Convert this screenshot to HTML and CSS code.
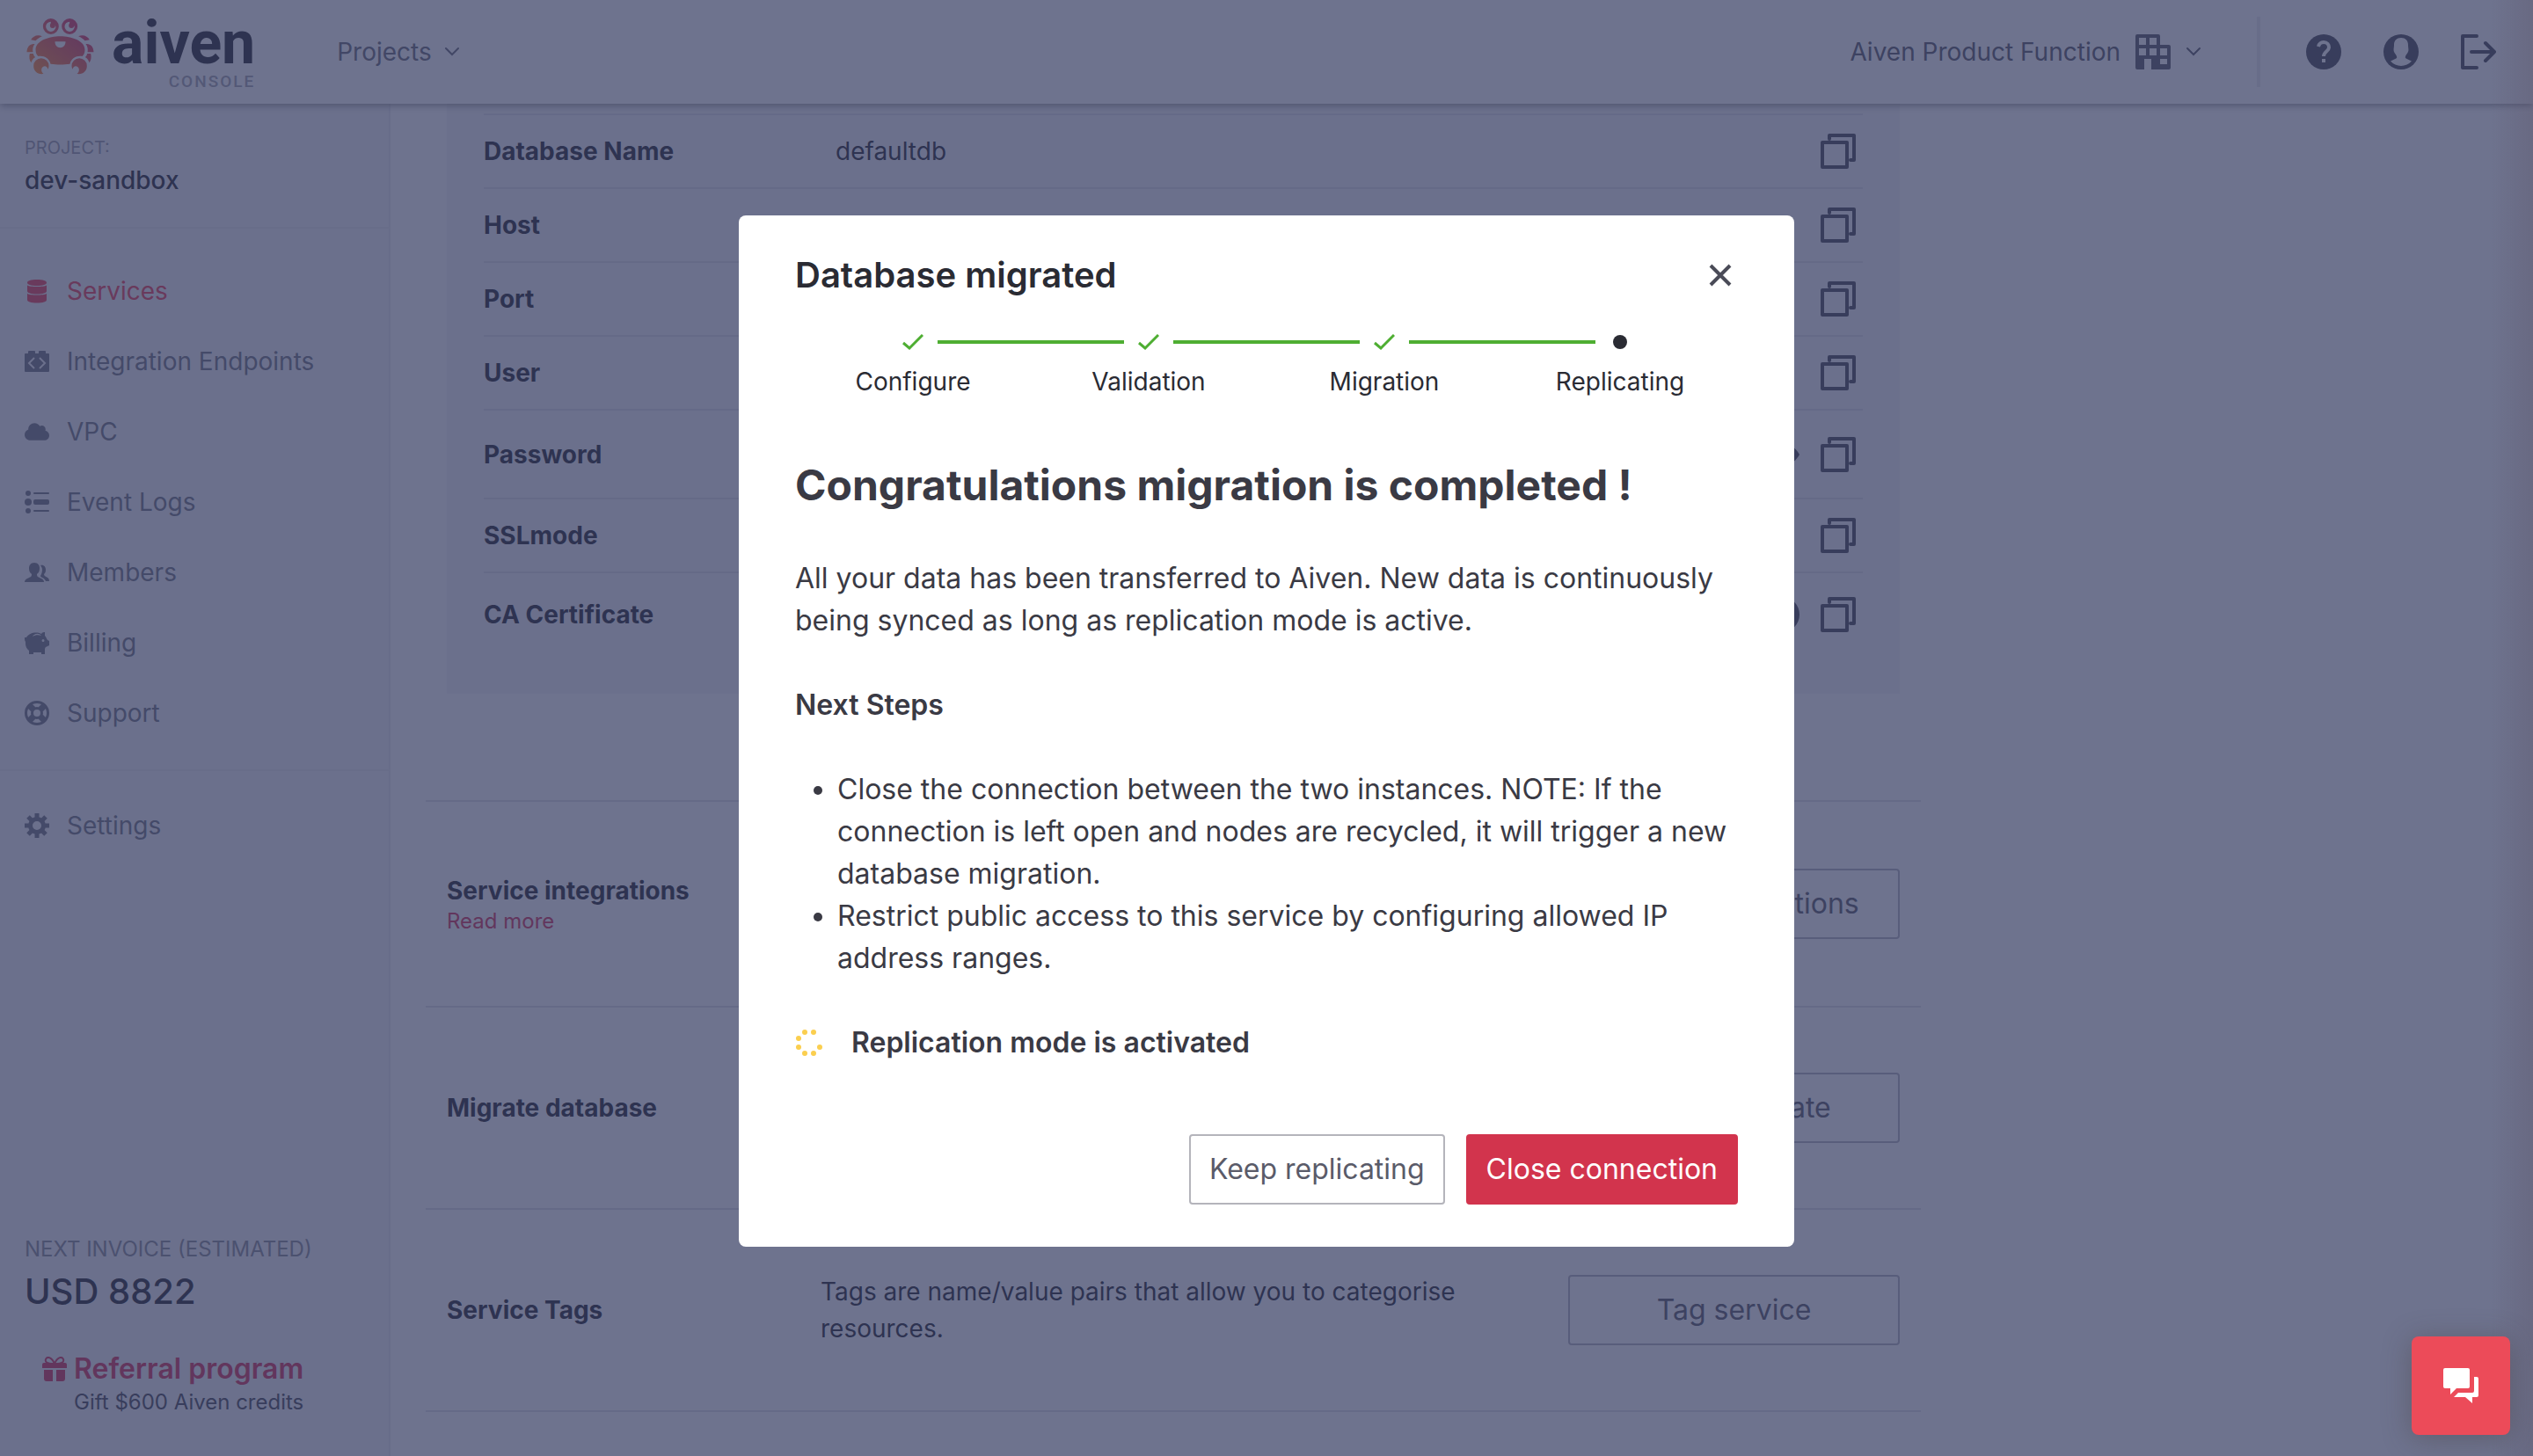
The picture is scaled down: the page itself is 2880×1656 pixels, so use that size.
FILE: index.html
```html
<!DOCTYPE html>
<html lang="en">
<head>
<meta charset="utf-8">
<title>Aiven Console</title>
<meta name="viewport" content="width=device-width, initial-scale=1">
<link rel="stylesheet" href="styles.css">
</head>
<body>
<svg class="sprite" aria-hidden="true">
  <symbol id="copy" viewBox="0 0 40 40"><path d="M10 6V2h28v28h-4M2 10h28v28H2z" fill="none" stroke="currentColor" stroke-width="4" stroke-linejoin="round" stroke-linecap="round"/></symbol>
  <symbol id="chevron" viewBox="0 0 18 12"><path d="M2 2l7 7 7-7" fill="none" stroke="currentColor" stroke-width="2" stroke-linecap="round"/></symbol>
  <symbol id="check" viewBox="0 0 24 18"><path d="M1 10l7 6L23 1" fill="none" stroke="currentColor" stroke-width="3"/></symbol>
</svg>

<div class="app">
  <header class="topbar">
    <a class="logo" href="#">
      <svg class="crab" viewBox="32 32 230 192" aria-hidden="true">
        <defs><linearGradient id="shell" gradientUnits="userSpaceOnUse" x1="200" y1="70" x2="80" y2="220"><stop offset="0" stop-color="#dc3f64"/><stop offset="1" stop-color="#ff8a3a"/></linearGradient></defs>
        <g fill="url(#shell)">
          <path fill-rule="evenodd" d="M115 32a27 27 0 1 1 0 54a27 27 0 1 1 0-54zM115 43a17 17 0 1 0 17 17c-2-2-3-4-3-7a9 9 0 0 1-14-10z"/>
          <path fill-rule="evenodd" d="M179 32a27 27 0 1 1 0 54a27 27 0 1 1 0-54zM179 43a17 17 0 1 0 17 17c-2-2-3-4-3-7a9 9 0 0 1-14-10z"/>
          <circle cx="121" cy="56" r="9"/><circle cx="185" cy="56" r="9"/>
          <path fill-rule="evenodd" d="M147 93c38 0 84 15 84 46c0 10-4 18-9 22c-19-3-37 6-42 26c-20 3-46 3-66 0c-5-20-23-29-42-26c-5-4-9-12-9-22c0-31 46-46 84-46zM129 111c0 12 7 21 18 21s18-9 18-21z"/>
          <path d="M47 105C53 91 72 85 85 93C76 97 69 102 63 108zM33 147C33 129 44 117 60 119C53 128 52 139 54 147zM43 152h12c1 5 3 9 7 12c-8 5-12 11-14 19c-6-7-8-20-5-31z"/>
          <path d="M247 105C241 91 222 85 209 93C218 97 225 102 231 108zM261 147C261 129 250 117 234 119C241 128 242 139 240 147zM251 152h-12c-1 5-3 9-7 12c8 5 12 11 14 19c6-7 8-20 5-31z"/>
          <path d="M56 194a26 26 0 0 1 52 0c0 4-1 8-3 11c-2-10-11-13-17-8c-8 6-6 18 2 24c-20 3-34-9-34-27z"/>
          <path d="M238 194a26 26 0 0 0-52 0c0 4 1 8 3 11c2-10 11-13 17-8c8 6 6 18-2 24c20 3 34-9 34-27z"/>
        </g>
      </svg>
      <span class="wordmark"><span class="word">aiven</span><span class="sub">CONSOLE</span></span>
    </a>
    <button class="menu projects">Projects <svg class="chev" aria-hidden="true"><use href="#chevron"/></svg></button>
    <div class="account">
      <button class="menu org">Aiven Product Function
        <svg class="ico40" viewBox="0 0 40 40" aria-hidden="true"><path fill="currentColor" fill-rule="evenodd" d="M2 0h24a2 2 0 0 1 2 2v10h10a2 2 0 0 1 2 2v24a2 2 0 0 1-2 2H18V28h-8v12H2a2 2 0 0 1-2-2V2a2 2 0 0 1 2-2zM4 4v8h8V4zM16 4v8h8V4zM4 16v8h8v-8zM16 16v8h8v-8zM28 16v8h8v-8zM28 28v6h8v-6z"/></svg>
        <svg class="chev" aria-hidden="true"><use href="#chevron"/></svg></button>
      <span class="divider"></span>
      <button class="iconbtn" aria-label="Help"><svg class="ico40" viewBox="0 0 40 40" aria-hidden="true"><circle cx="20" cy="20" r="20" fill="currentColor"/><path d="M14 14c1-4 4-5 6-5c4 0 6 3 6 6c0 4-6 5-6 10" fill="none" stroke="#fff" stroke-width="4"/><path d="M18 28h4v4h-4z" fill="#fff"/></svg></button>
      <button class="iconbtn" aria-label="Profile"><svg class="ico40" viewBox="0 0 40 40" aria-hidden="true"><circle cx="20" cy="20" r="20" fill="currentColor"/><path fill="#fff" d="M20 4c5 0 8 3 8 8c0 4 1 5 0 8c-1 2-4 5-3 7c1 1 4 2 7 3.500a16 16 0 0 1-24 0c3-1.500 6-2.500 7-3.500c1-2-2-5-3-7c-1-3 0-4 0-8c0-5 3-8 8-8z"/></svg></button>
      <button class="iconbtn" aria-label="Log out"><svg class="ico40" viewBox="0 0 40 40" aria-hidden="true"><path d="M18 2H2v36h16M12 20h26M28 10l10 10l-10 10" fill="none" stroke="currentColor" stroke-width="4" stroke-linecap="round" stroke-linejoin="round"/></svg></button>
    </div>
  </header>

  <div class="body">
    <aside class="sidebar">
      <div class="project"><span class="caption">PROJECT:</span><strong>dev-sandbox</strong></div>
      <nav class="nav">
        <a class="active" href="#"><svg viewBox="0 0 28 28" aria-hidden="true"><path fill="currentColor" d="M14 1c7 0 11 1.500 11 3.500S21 8 14 8S3 6.500 3 4.500S7 1 14 1zM3 7.500C6 9.500 22 9.500 25 7.500V14c0 2-4 3.500-11 3.500S3 16 3 14zM3 17c3 2 19 2 22 0v7c0 2-4 3.500-11 3.500S3 26 3 24z"/></svg>Services</a>
        <a href="#"><svg viewBox="0 0 28 28" aria-hidden="true"><path fill="currentColor" d="M4 5V3a1 1 0 0 1 1-1h6a1 1 0 0 1 1 1v2h4V3a1 1 0 0 1 1-1h6a1 1 0 0 1 1 1v2h3a1 1 0 0 1 1 1v19a1 1 0 0 1-1 1H1a1 1 0 0 1-1-1V6a1 1 0 0 1 1-1z"/><path d="M11 10l-6 6 6 6M17 10l6 6-6 6" fill="none" stroke="#f5f5f7" stroke-width="2"/></svg>Integration Endpoints</a>
        <a href="#"><svg viewBox="0 0 640 512" aria-hidden="true"><path fill="currentColor" d="M537.600 226.600c4.100-10.700 6.400-22.400 6.400-34.600 0-53-43-96-96-96-19.700 0-38.100 6-53.300 16.200C367 64.200 315.300 32 256 32c-88.400 0-160 71.600-160 160 0 2.700.1 5.400.2 8.100C40.200 219.800 0 273.200 0 336c0 79.500 64.500 144 144 144h368c70.700 0 128-57.300 128-128 0-61.900-44-113.600-102.400-125.400z"/></svg>VPC</a>
        <a href="#"><svg viewBox="0 0 28 28" aria-hidden="true"><g fill="currentColor"><circle cx="4" cy="4" r="3"/><circle cx="4" cy="14" r="4"/><circle cx="4" cy="24" r="3"/><rect x="10" y="3" width="18" height="2" rx="1"/><rect x="10" y="11" width="18" height="6" rx="2"/><rect x="10" y="23" width="18" height="2" rx="1"/></g></svg>Event Logs</a>
        <a href="#"><svg viewBox="0 0 28 28" aria-hidden="true"><path fill="currentColor" d="M11 3c4 0 6 3 6 6c0 4-1 5-3 7c0 4 2 3 5 5c2 1 3 2 3 4H0c0-2 1-3 3-4c3-2 5-1 5-5c-2-2-3-3-3-7c0-3 2-6 6-6zM18 6c4-1 6 2 6 5c0 3-1 4-2 5c0 4 6 2 6 8h-4c-1-4-6-4-6-6c1-2 2-4 2-7c0-2-1-4-2-5z"/></svg>Members</a>
        <a href="#"><svg viewBox="0 0 28 28" aria-hidden="true"><path fill="currentColor" fill-rule="evenodd" d="M0 8h2c3-5 11-7 17-4c1-2 3-2 4-2v4c2 2 2 4 3 5l2 1v5l-4 2c-1 1-1 2-1 3v5h-4v-2h-9v2H5v-4c-4-3-4-7-4-10c-1-1-1-3-1-5zM9 7c3-2 7-2 10-1c-3-4-9-2-10 1zM21 10a1.500 1.500 0 1 0 0 3a1.500 1.500 0 1 0 0-3z"/></svg>Billing</a>
        <a href="#"><svg viewBox="0 0 28 28" aria-hidden="true"><g fill="none" stroke="currentColor"><circle cx="14" cy="14" r="12.500" stroke-width="3"/><circle cx="14" cy="14" r="5.500" stroke-width="3"/><path d="M5 5l5 5M18 18l5 5M23 5l-5 5M10 18l-5 5" stroke-width="7"/></g></svg>Support</a>
      </nav>
      <nav class="nav">
        <a href="#"><svg viewBox="0 0 28 28" aria-hidden="true"><g fill="none" stroke="currentColor"><circle cx="14" cy="14" r="7.500" stroke-width="5"/><path d="M14 0v5M14 23v5M0 14h5M23 14h5M4 4l4 4M20 20l4 4M24 4l-4 4M8 20l-4 4" stroke-width="5"/></g></svg>Settings</a>
      </nav>
      <div class="billing">
        <span class="invoice">NEXT INVOICE (ESTIMATED)</span>
        <strong class="amount">USD 8822</strong>
        <a class="referral" href="#">
          <svg viewBox="0 0 28 28" aria-hidden="true"><path d="M13 8C5 8 3 6 4 3c2-4 7-2 10 5c3-7 8-9 10-5c1 3-1 5-9 5" fill="none" stroke="currentColor" stroke-width="2"/><path fill="currentColor" d="M2 7h24a2 2 0 0 1 2 2v4H0V9a2 2 0 0 1 2-2zM2 15h10v13H5a3 3 0 0 1-3-3zM16 15h10v10a3 3 0 0 1-3 3h-7z"/></svg>
          <span><b>Referral program</b><small>Gift $600 Aiven credits</small></span>
        </a>
      </div>
    </aside>

    <main class="main">
      <div class="panel">
        <table class="conn">
          <tr><th scope="row">Database Name</th><td>defaultdb</td><td class="act"><button class="iconbtn" aria-label="Copy"><svg class="ico40"><use href="#copy"/></svg></button></td></tr>
          <tr><th scope="row">Host</th><td></td><td class="act"><button class="iconbtn" aria-label="Copy"><svg class="ico40"><use href="#copy"/></svg></button></td></tr>
          <tr><th scope="row">Port</th><td></td><td class="act"><button class="iconbtn" aria-label="Copy"><svg class="ico40"><use href="#copy"/></svg></button></td></tr>
          <tr><th scope="row">User</th><td></td><td class="act"><button class="iconbtn" aria-label="Copy"><svg class="ico40"><use href="#copy"/></svg></button></td></tr>
          <tr class="tall"><th scope="row">Password</th><td></td><td class="act"><button class="iconbtn" aria-label="Show"><svg class="ico40" viewBox="0 0 40 40"><path fill="currentColor" d="M0 20C8 4 30 2 40 20C30 38 8 36 0 20z"/></svg></button><button class="iconbtn" aria-label="Copy"><svg class="ico40"><use href="#copy"/></svg></button></td></tr>
          <tr><th scope="row">SSLmode</th><td></td><td class="act"><button class="iconbtn" aria-label="Copy"><svg class="ico40"><use href="#copy"/></svg></button></td></tr>
          <tr class="last"><th scope="row">CA Certificate</th><td></td><td class="act"><button class="iconbtn" aria-label="Download"><svg class="ico40" viewBox="0 0 40 40"><circle cx="20" cy="20" r="20" fill="currentColor"/></svg></button><button class="iconbtn" aria-label="Copy"><svg class="ico40"><use href="#copy"/></svg></button></td></tr>
        </table>
      </div>
      <div class="sections">
        <section class="row"><div><h3>Service integrations</h3><a href="#">Read more</a></div><p></p><button class="btn">Set up integrations</button></section>
        <section class="row"><div><h3>Migrate database</h3></div><p></p><button class="btn">Set up migrate</button></section>
        <section class="row"><div><h3>Service Tags</h3></div><p>Tags are name/value pairs that allow you to categorise resources.</p><button class="btn">Tag service</button></section>
        <section class="row"></section>
      </div>
    </main>
  </div>
</div>

<div class="overlay">
  <div class="modal" role="dialog" aria-modal="true" aria-labelledby="modal-title">
    <div class="modal-head">
      <h2 id="modal-title">Database migrated</h2>
      <button class="iconbtn close" aria-label="Close"><svg viewBox="0 0 28 28"><path d="M3 3l22 22M25 3L3 25" fill="none" stroke="currentColor" stroke-width="4"/></svg></button>
    </div>
    <ol class="steps">
      <li class="done"><span class="mark"><svg><use href="#check"/></svg></span>Configure</li>
      <li class="done"><span class="mark"><svg><use href="#check"/></svg></span>Validation</li>
      <li class="done"><span class="mark"><svg><use href="#check"/></svg></span>Migration</li>
      <li><span class="mark"><i class="dot"></i></span>Replicating</li>
    </ol>
    <h1>Congratulations migration is completed !</h1>
    <div class="copy">
      <p>All your data has been transferred to Aiven. New data is continuously being synced as long as replication mode is active.</p>
      <h4>Next Steps</h4>
      <ul>
        <li>Close the connection between the two instances. NOTE: If the connection is left open and nodes are recycled, it will trigger a new database migration.</li>
        <li>Restrict public access to this service by configuring allowed IP address ranges.</li>
      </ul>
      <div class="status">
        <svg viewBox="0 0 32 32" aria-hidden="true"><g fill="#fbcf4f"><circle cx="11" cy="4" r="3"/><circle cx="21" cy="4" r="3"/><circle cx="4" cy="11" r="3"/><circle cx="4" cy="21" r="3"/><circle cx="28" cy="21" r="3"/><circle cx="11" cy="28" r="3"/><circle cx="21" cy="28" r="3"/></g></svg>
        <b>Replication mode is activated</b>
      </div>
    </div>
    <div class="modal-foot">
      <button class="btn2">Keep replicating</button>
      <button class="btn2 primary">Close connection</button>
    </div>
  </div>
</div>
<button class="chat" aria-label="Open chat"><svg viewBox="0 0 40 40" aria-hidden="true"><path fill="currentColor" d="M2 0h26a2 2 0 0 1 2 2v19a2 2 0 0 1-2 2H15l-7 7v-7H2a2 2 0 0 1-2-2V2a2 2 0 0 1 2-2zM35 10h3a2 2 0 0 1 2 2v19a2 2 0 0 1-2 2h-5v7l-8-7H12l5-5h16a2 2 0 0 0 2-2z"/></svg></button>
</body>
</html>
```
FILE: styles.css
```css
* { box-sizing: border-box; }

body {
  margin: 0;
  font-family: Inter, "Liberation Sans", sans-serif;
  font-size: 28px;
  line-height: 42px;
  color: #2a2b33;
  background: #fff;
}

h1, h2, h3, h4, p, ol, ul { margin: 0; padding: 0; }
a { color: #d8345a; text-decoration: none; }
button { font: inherit; color: inherit; background: none; border: 0; padding: 0; }
svg { display: block; flex: none; }
.sprite { position: absolute; width: 0; height: 0; }
.ico40 { width: 40px; height: 40px; }
.chev { width: 18px; height: 12px; }
.iconbtn { color: #4a4b57; }

.app { display: flex; flex-direction: column; height: 100vh; overflow: hidden; }

/* Top bar */
.topbar {
  display: flex;
  align-items: center;
  height: 118px;
  flex: none;
  padding: 0 42px 0 30px;
  position: relative;
  z-index: 1;
  background: #fff;
  box-shadow: 0 2px 8px rgba(0, 0, 0, .4);
}
.logo { display: flex; align-items: flex-start; gap: 20px; color: #2a2b33; }
.crab { width: 77px; height: 64px; margin-top: 6px; }
.wordmark { display: flex; flex-direction: column; align-items: flex-end; font-family: Roboto, sans-serif; }
.word { font-size: 68px; line-height: 68px; font-weight: 700; }
.sub { font-size: 19px; line-height: 20px; font-weight: 500; letter-spacing: 2px; color: #a5a6b0; }
.menu { display: flex; align-items: center; color: #6b6c79; }
.projects { gap: 14px; margin-left: 93px; }
.account { display: flex; align-items: center; gap: 48px; margin-left: auto; }
.org { gap: 17px; color: #5a5b69; }
.divider { width: 4px; height: 80px; background: #eaeaee; margin: 0 4px 0 15px; }

.body { display: flex; flex: 1; min-height: 0; }

/* Sidebar */
.sidebar {
  display: flex;
  flex-direction: column;
  width: 444px;
  flex: none;
  background: #f5f5f7;
  border-right: 2px solid #ebebef;
}
.project { display: flex; flex-direction: column; padding: 29px 28px 0; height: 140px; }
.caption { font-size: 20px; line-height: 42px; color: #9b9ca8; }
.project strong { font-weight: 500; line-height: 32px; }
.nav { border-top: 2px solid #ebebef; padding: 31px 28px 24px; }
.nav + .nav { padding-top: 22px; }
.nav a { display: flex; align-items: center; gap: 20px; height: 80px; color: #747582; }
.nav a.active { color: #ee4258; }
.nav svg { width: 28px; height: 28px; }
.billing { display: flex; flex-direction: column; margin-top: auto; padding: 0 28px 45px; }
.invoice { font-size: 24px; line-height: 32px; color: #8b8c98; }
.amount { font-size: 40px; line-height: 64px; font-weight: 500; }
.referral { display: flex; gap: 8px; margin-top: 34px; padding-left: 20px; }
.referral svg { width: 28px; height: 28px; margin-top: 8px; }
.referral span { display: flex; flex-direction: column; }
.referral b { font-size: 32px; line-height: 44px; font-weight: 600; }
.referral small { font-size: 24px; line-height: 32px; color: #4a4b57; }

/* Service details */
.main { flex: 1; padding: 0 40px; min-width: 0; }
.panel { max-width: 1652px; margin-left: 24px; padding: 11px 42px 43px; background: #f5f5f7; }
.conn { width: 100%; border-collapse: separate; border-spacing: 0; table-layout: fixed; }
.conn th, .conn td { height: 84px; padding: 0; border-top: 2px solid #e2e2e7; text-align: left; }
.conn th { width: 400px; font-weight: 700; }
.conn .tall > * { height: 101px; }
.conn .last > * { height: 96px; }
.conn .act { width: 300px; padding-right: 8px; line-height: 40px; text-align: right; }
.act .iconbtn { display: inline-block; vertical-align: top; margin-left: 24px; }
.sections { max-width: 1700px; margin-top: 121px; }
.row {
  display: grid;
  grid-template-columns: 377px 1fr 377px;
  gap: 48px;
  align-items: center;
  height: 230px;
  padding: 0 24px;
  border-top: 2px solid #e2e2e7;
}
.row:first-child { height: 234px; }
.row h3 { font-size: 28px; line-height: 40px; font-weight: 700; }
.row div a { display: block; font-size: 24px; line-height: 30px; }
.row p { max-width: 760px; }
.btn { height: 80px; border: 2px solid #b4b5be; border-radius: 4px; font-size: 32px; color: #5a5b69; }

/* Dialog */
.overlay {
  position: fixed;
  inset: 0;
  z-index: 2;
  display: flex;
  align-items: center;
  justify-content: center;
  padding-top: 6px;
  background: linear-gradient(to left, rgba(90, 80, 100, .28), rgba(90, 80, 100, 0) 48px), rgba(49, 55, 94, .7);
}
.modal { width: 1200px; padding: 44px 64px 48px; border-radius: 8px; background: #fff; }
.modal-head { display: flex; justify-content: space-between; align-items: center; }
.modal h2 { font-size: 40px; line-height: 48px; font-weight: 600; }
.close { padding: 6px; }
.close svg { width: 28px; height: 28px; }
.steps { display: grid; grid-template-columns: repeat(4, 1fr); margin-top: 40px; list-style: none; text-align: center; }
.steps li { position: relative; }
.steps .mark { display: flex; align-items: center; justify-content: center; height: 24px; margin-bottom: 12px; color: #4eae32; }
.steps .mark svg { width: 24px; height: 18px; }
.steps .done::after {
  content: "";
  position: absolute;
  top: 10px;
  left: calc(50% + 28px);
  width: calc(100% - 56px);
  height: 4px;
  background: #4eae32;
}
.dot { width: 16px; height: 16px; border-radius: 50%; background: #2a2b33; }
.modal h1 { margin-top: 61px; font-size: 48px; line-height: 72px; font-weight: 700; color: #3a3a44; }
.copy { margin-top: 46px; font-size: 32px; line-height: 48px; color: #3a3a44; }
.copy h4 { margin: 48px 0; font-size: 32px; font-weight: 600; }
.copy ul { padding-left: 48px; }
.status { display: flex; align-items: center; gap: 32px; margin-top: 48px; }
.status svg { width: 32px; height: 32px; }
.status b { font-weight: 600; }
.modal-foot { display: flex; justify-content: flex-end; gap: 24px; margin-top: 80px; }
.btn2 { height: 80px; padding: 0 21px; border: 2px solid #b4b4bb; border-radius: 4px; font-size: 32px; color: #5a5b69; }
.primary { border-color: #d2344d; background: #d2344d; color: #fff; }

.chat {
  position: fixed;
  right: 26px;
  bottom: 24px;
  z-index: 3;
  display: flex;
  align-items: center;
  justify-content: center;
  width: 112px;
  height: 112px;
  border-radius: 8px;
  background: #ec4b59;
  color: #fff;
  box-shadow: 0 4px 32px rgba(70, 60, 60, .4);
}
.chat svg { width: 40px; height: 40px; }
```
